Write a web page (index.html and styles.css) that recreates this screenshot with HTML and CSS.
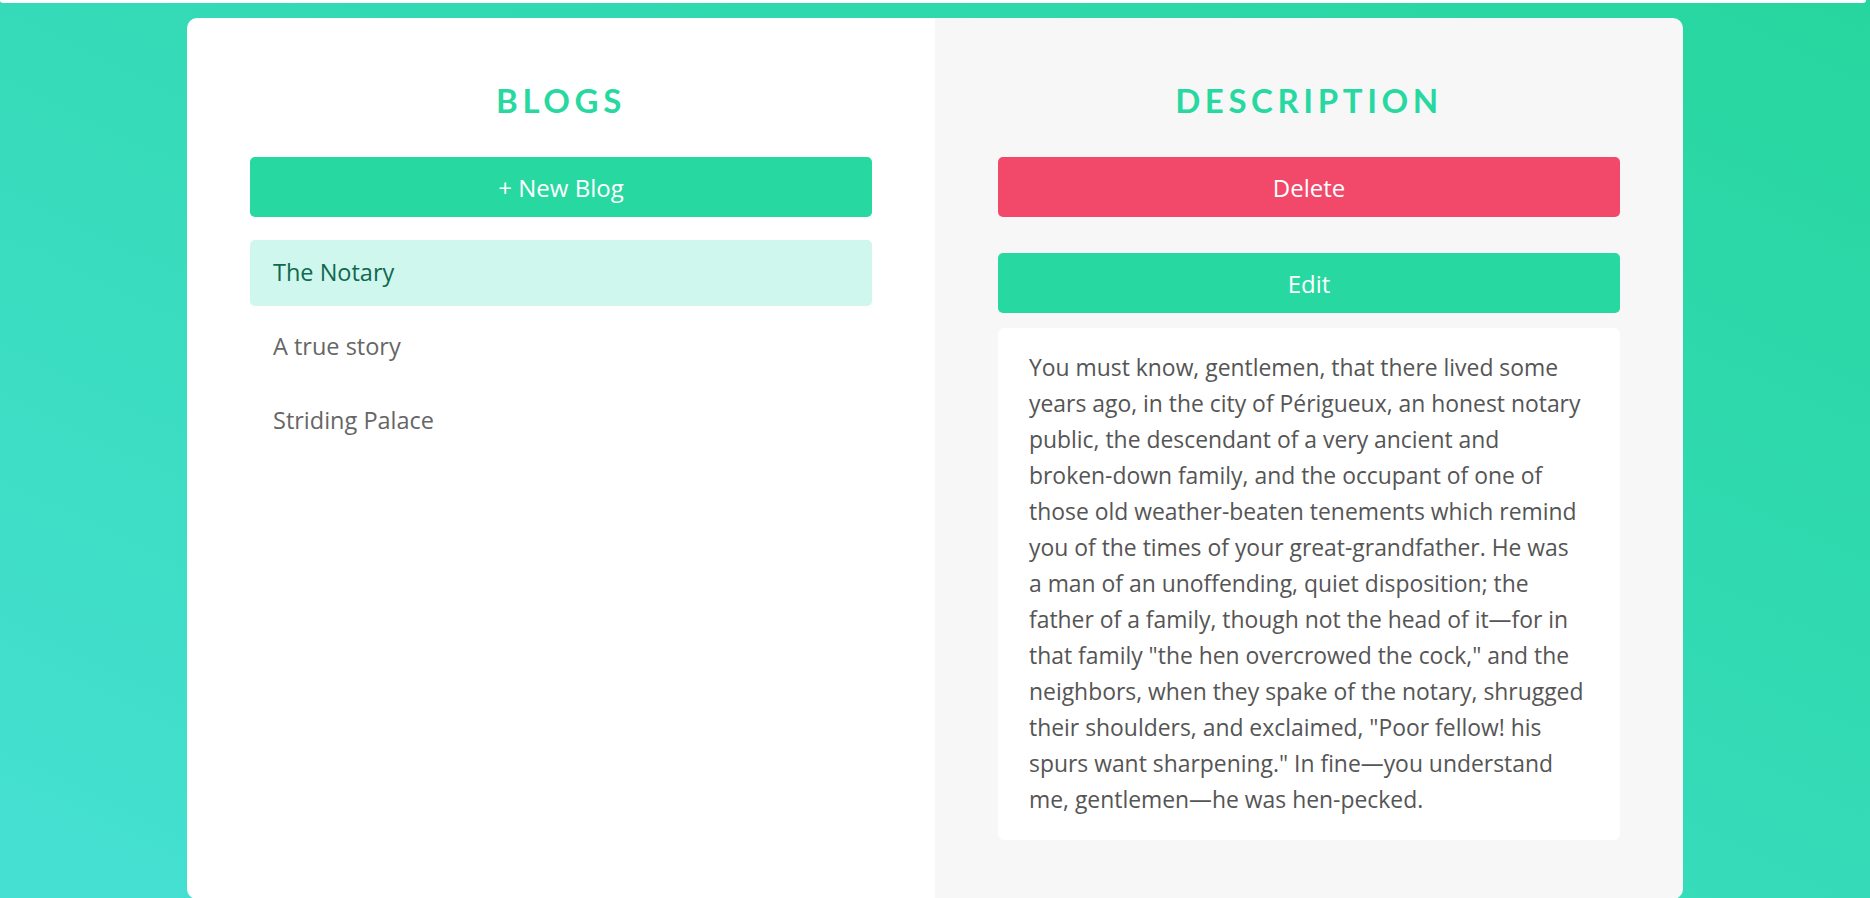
FILE: index.html
```html
<!DOCTYPE html>
<html lang="en">
<head>
<meta charset="utf-8">
<title>Blogs</title>
<link rel="stylesheet" href="styles.css">
</head>
<body>
<div class="top-strip"></div>
<main class="card">
  <section class="col col-blogs">
    <h1 class="title">BLOGS</h1>
    <button class="btn btn-green">+ New Blog</button>
    <ul class="blog-list">
      <li class="blog-item active">The Notary</li>
      <li class="blog-item">A true story</li>
      <li class="blog-item">Striding Palace</li>
    </ul>
  </section>
  <section class="col col-desc">
    <h1 class="title">DESCRIPTION</h1>
    <button class="btn btn-red">Delete</button>
    <button class="btn btn-green btn-edit">Edit</button>
    <p class="desc-box">You must know, gentlemen, that there lived some<br>
years ago, in the city of Périgueux, an honest notary<br>
public, the descendant of a very ancient and<br>
broken-down family, and the occupant of one of<br>
those old weather-beaten tenements which remind<br>
you of the times of your great-grandfather. He was<br>
a man of an unoffending, quiet disposition; the<br>
father of a family, though not the head of it—for in<br>
that family "the hen overcrowed the cock," and the<br>
neighbors, when they spake of the notary, shrugged<br>
their shoulders, and exclaimed, "Poor fellow! his<br>
spurs want sharpening." In fine—you understand<br>
me, gentlemen—he was hen-pecked.</p>
  </section>
</main>
</body>
</html>
```
FILE: styles.css
```css
html, body {
  margin: 0;
  padding: 0;
  height: 898px;
  overflow: hidden;
}
body {
  background: linear-gradient(to top right, #46e0d3 0%, #35dbb8 50%, #26d69e 100%);
  font-family: "Open Sans", "Noto Sans", sans-serif;
}
.top-strip {
  height: 3px;
  margin-right: 4px;
  background: #fff;
  border-radius: 0 0 4px 4px;
}
.card {
  width: 80%;
  height: 881px;
  margin: 15px auto 0;
  border-radius: 10px;
  overflow: hidden;
  display: grid;
  grid-template-columns: 1fr 1fr;
}
.col {
  padding: 62px 63px 0;
  display: flex;
  flex-direction: column;
}
.col-blogs { background: #fff; }
.col-desc { background: #f7f7f7; }
.title {
  margin: 0 0 37px;
  font-family: "Lato", sans-serif;
  font-weight: 700;
  font-size: 33px;
  line-height: 40px;
  letter-spacing: 4.6px;
  text-align: center;
  color: #28d8a1;
}
.btn {
  display: block;
  width: 100%;
  height: 60px;
  border: 0;
  border-radius: 5px;
  color: #fff;
  font-family: "Open Sans", "Noto Sans", sans-serif;
  font-size: 24px;
  padding: 0;
  cursor: pointer;
}
.btn-green { background: #27d8a1; }
.btn-red { background: #f2496b; }
.btn-edit { margin-top: 36px; }
.blog-list {
  list-style: none;
  margin: 23px 0 0;
  padding: 0;
  display: flex;
  flex-direction: column;
  gap: 8px;
}
.blog-item {
  padding: 17px 23px 19px;
  font-size: 23.5px;
  line-height: 30px;
  color: #666;
  border-radius: 5px;
}
.blog-item.active {
  background: #cff7ee;
  color: #10694f;
}
.desc-box {
  margin: 15px 0 0;
  background: #fff;
  border-radius: 6px;
  padding: 22px 20px 22px 31px;
  font-size: 22.9px;
  line-height: 36px;
  color: #555;
}
```
